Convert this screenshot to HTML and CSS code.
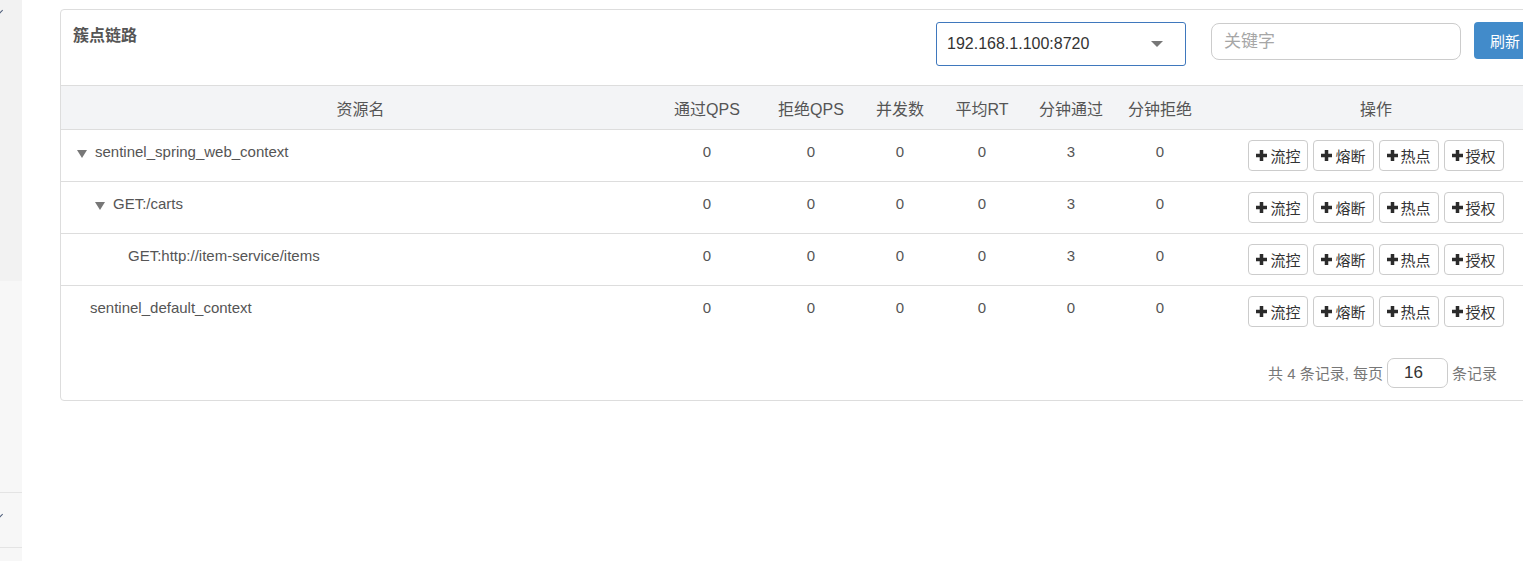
FILE: index.html
```html
<!DOCTYPE html>
<html lang="zh-CN">
<head>
  <meta charset="UTF-8" />
  <title>簇点链路</title>
  <link rel="stylesheet" href="styles.css">
</head>
<body>
  <div class="sidebar">
    <div class="nav-block first"><span class="chevron"></span></div>
    <div class="nav-block second"></div>
    <div class="nav-block third"><span class="chevron"></span></div>
  </div>

  <div class="main">
    <div class="card">
      <div class="card-header">
        <h3 class="title">簇点链路</h3>
        <div class="machine-select">
          <span>192.168.1.100:8720</span>
          <span class="caret"></span>
        </div>
        <input class="search" type="text" placeholder="关键字" />
        <button class="btn-refresh">刷新</button>
      </div>

      <table class="tree-table">
        <colgroup>
          <col style="width: 599px">
          <col style="width: 94px">
          <col style="width: 114px">
          <col style="width: 64px">
          <col style="width: 100px">
          <col style="width: 78px">
          <col style="width: 100px">
          <col style="width: 332px">
        </colgroup>
        <thead>
          <tr>
            <th>资源名</th>
            <th>通过QPS</th>
            <th>拒绝QPS</th>
            <th>并发数</th>
            <th>平均RT</th>
            <th>分钟通过</th>
            <th>分钟拒绝</th>
            <th>操作</th>
          </tr>
        </thead>
        <tbody id="rows"></tbody>
      </table>

      <div class="pager">
        <span>共 4 条记录, 每页</span>
        <input class="page-size" type="text" value="16" />
        <span>条记录</span>
      </div>
    </div>
  </div>

  <script>
    const nodes = [
      { name: "sentinel_spring_web_context", level: "l0", toggle: true, pass: 3 },
      { name: "GET:/carts", level: "l1", toggle: true, pass: 3 },
      { name: "GET:http://item-service/items", level: "l2", toggle: false, pass: 3 },
      { name: "sentinel_default_context", level: "l3", toggle: false, pass: 0 }
    ];
    const actions = ["流控", "熔断", "热点", "授权"];
    const plus = '<svg class="plus" viewBox="0 0 10 10"><path d="M3.4 0h3.2v3.4H10v3.2H6.6V10H3.4V6.6H0V3.4h3.4z"/></svg>';

    const tbody = document.getElementById("rows");
    nodes.forEach(node => {
      const tr = document.createElement("tr");
      const btns = actions.map(a => `<button class="btn-op">${plus}${a}</button>`).join("");
      tr.innerHTML = `
        <td class="name ${node.level}">${node.toggle ? '<span class="toggle"></span>' : ''}${node.name}</td>
        <td>0</td><td>0</td><td>0</td><td>0</td>
        <td>${node.pass}</td><td>0</td>
        <td class="ops"><div class="op-group">${btns}</div></td>
      `;
      tbody.appendChild(tr);
    });
  </script>
</body>
</html>
```

FILE: styles.css
```css
html, body {
  margin: 0;
  height: 100%;
}

body {
  display: flex;
  overflow: hidden;
  background: #fff;
  font-family: "Liberation Sans", "Noto Sans CJK SC", sans-serif;
  font-size: 15px;
  color: #555;
}

.sidebar {
  width: 22px;
  flex-shrink: 0;
  background: #f7f7f7;
  overflow: hidden;
}

.nav-block {
  display: flow-root;
}

.nav-block.first {
  height: 281px;
  background: #f2f2f2;
}

.nav-block.second {
  height: 211px;
  border-bottom: 1px solid #e4e4e4;
}

.nav-block.third {
  height: 54px;
  border-bottom: 1px solid #e4e4e4;
}

.chevron {
  display: block;
  width: 4px;
  height: 4px;
  margin-left: -3px;
  border-right: 1.5px solid #4a5a78;
  border-bottom: 1.5px solid #4a5a78;
  transform: rotate(45deg);
}

.nav-block.first .chevron {
  margin-top: 8px;
}

.nav-block.third .chevron {
  margin-top: 19px;
}

.main {
  flex: 1;
  min-width: 0;
  padding: 9px 0 0 38px;
}

.card {
  width: 1481px;
  border: 1px solid #ddd;
  border-radius: 4px;
  background: #fff;
}

.card-header {
  display: flex;
  align-items: flex-start;
  height: 75px;
  padding: 12px 8px 0 12px;
  box-sizing: border-box;
}

.title {
  margin: 3px 0 0;
  flex: 1;
  font-size: 16px;
  line-height: 22px;
  font-weight: bold;
  color: #555;
}

.machine-select {
  width: 250px;
  height: 44px;
  box-sizing: border-box;
  border: 1px solid #3f78bd;
  border-radius: 3px;
  padding: 0 22px 0 10px;
  display: flex;
  align-items: center;
  justify-content: space-between;
  font-size: 16px;
  color: #333;
}

.caret {
  width: 0;
  height: 0;
  border-left: 6px solid transparent;
  border-right: 6px solid transparent;
  border-top: 6px solid #777;
}

.search {
  width: 250px;
  height: 37px;
  box-sizing: border-box;
  margin: 1px 0 0 25px;
  padding: 0 12px;
  border: 1px solid #ccc;
  border-radius: 8px;
  font-family: inherit;
  font-size: 17px;
  outline: none;
}

.search::placeholder {
  color: #a6a6a6;
}

.btn-refresh {
  width: 60px;
  height: 37px;
  margin-left: 13px;
  border: none;
  border-radius: 4px;
  background: #428bca;
  color: #fff;
  font-family: inherit;
  font-size: 15px;
  text-align: left;
  padding-left: 16px;
}

.tree-table {
  width: 100%;
  table-layout: fixed;
  border-collapse: collapse;
}

.tree-table th {
  height: 43px;
  padding: 0;
  background: #f3f4f6;
  border-top: 1px solid #ddd;
  border-bottom: 1px solid #ddd;
  font-size: 16px;
  font-weight: normal;
  color: #555;
  text-align: center;
}

.tree-table td {
  height: 52px;
  padding: 12px 0 0;
  box-sizing: border-box;
  vertical-align: top;
  line-height: 20px;
  text-align: center;
  border-bottom: 1px solid #ddd;
}

.tree-table tbody tr:last-child td {
  border-bottom: none;
}

.tree-table td.name {
  text-align: left;
  white-space: nowrap;
}

.name.l0 { padding-left: 16px; }
.name.l1 { padding-left: 34px; }
.name.l2 { padding-left: 67px; }
.name.l3 { padding-left: 29px; }

.toggle {
  display: inline-block;
  width: 0;
  height: 0;
  margin-right: 8px;
  border-left: 5px solid transparent;
  border-right: 5px solid transparent;
  border-top: 8px solid #777;
  vertical-align: -1px;
}

.tree-table td.ops {
  padding-top: 10px;
}

.op-group {
  display: flex;
  justify-content: center;
  gap: 5px;
}

.btn-op {
  height: 31px;
  padding: 0 7px;
  border: 1px solid #ccc;
  border-radius: 4px;
  background: #fff;
  color: #333;
  font-family: inherit;
  font-size: 15px;
  display: flex;
  align-items: center;
}

.plus {
  width: 11px;
  height: 11px;
  margin-right: 3px;
  fill: #2b2b2b;
}

.pager {
  display: flex;
  justify-content: flex-end;
  align-items: center;
  gap: 4px;
  padding: 20px 45px 12px 0;
  color: #777;
  font-size: 15px;
}

.page-size {
  width: 61px;
  height: 30px;
  box-sizing: border-box;
  border: 1px solid #ccc;
  border-radius: 7px;
  padding: 0 0 0 16px;
  font-family: inherit;
  font-size: 17px;
  color: #333;
}
```
